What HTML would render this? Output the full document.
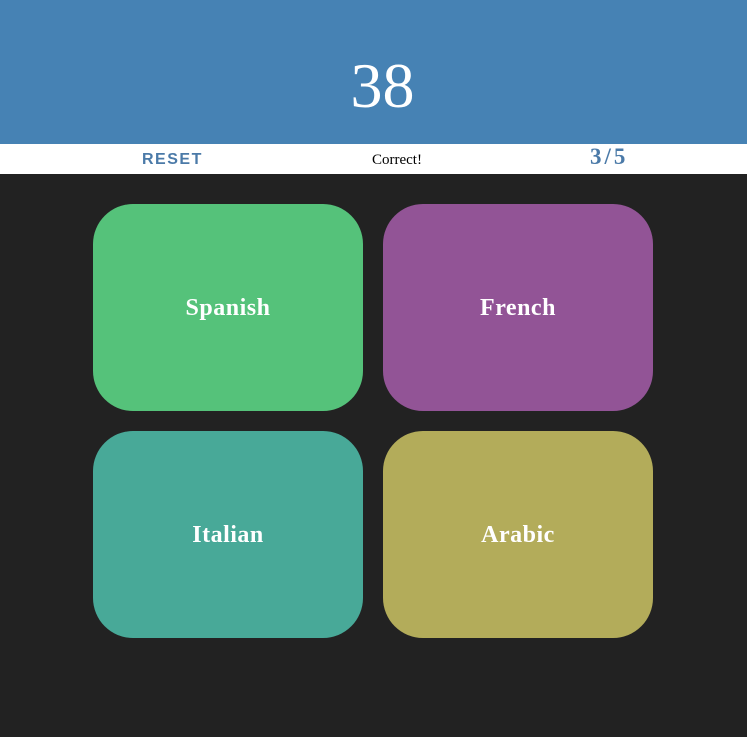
<!DOCTYPE html>
<html><head><style>
body{margin:0;width:747px;height:737px;background:#222;overflow:hidden;font-family:"Liberation Serif",serif}
.top{position:absolute;left:0;top:0;width:747px;height:144px;background:#4682b4;color:#fff;font-size:64px;text-align:center;line-height:172px;text-indent:18px}
.bar{position:absolute;left:0;top:144px;width:747px;height:30px;background:#fff}
.reset{position:absolute;left:142px;top:7px;font:bold 16px "Liberation Sans",sans-serif;letter-spacing:1.5px;color:#4b7aa8}
.msg{position:absolute;left:372px;top:8px;font-size:15px;color:#000}
.score{position:absolute;left:590px;top:0px;font-weight:bold;font-size:23px;color:#4b7aa8;letter-spacing:3px}
.c{position:absolute;width:270px;height:207px;border-radius:40px;color:#fff;font-weight:bold;font-size:24px;letter-spacing:0.5px;display:flex;align-items:center;justify-content:center;padding-top:2px;box-sizing:border-box}
</style></head><body>
<div class="top">38</div>
<div class="bar"><span class="reset">RESET</span><span class="msg">Correct!</span><span class="score">3/5</span></div>
<div class="c" style="left:93px;top:204px;background:#55c27a">Spanish</div>
<div class="c" style="left:383px;top:204px;background:#925496">French</div>
<div class="c" style="left:93px;top:431px;background:#48a998">Italian</div>
<div class="c" style="left:383px;top:431px;background:#b3ac5a">Arabic</div>
</body></html>
